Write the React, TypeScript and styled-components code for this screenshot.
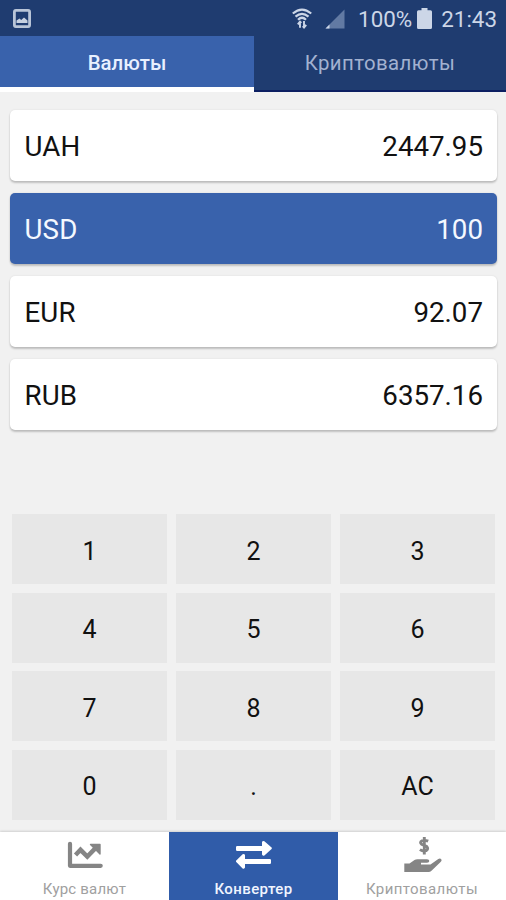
import React from 'react';
import styled, { createGlobalStyle } from 'styled-components';

const GlobalStyle = createGlobalStyle`
  * { box-sizing: border-box; }
  body { margin: 0; background: #f1f1f1; font-family: Roboto, sans-serif; }
  button { font: inherit; border: 0; padding: 0; margin: 0; }
`;

const Screen = styled.div`
  width: 506px;
  height: 900px;
  display: flex;
  flex-direction: column;
  background: #f1f1f1;
  overflow: hidden;
`;

const StatusBar = styled.header`
  height: 36px;
  flex: none;
  display: flex;
  align-items: center;
  background: #1f3c70;
  color: #ccd6e7;
  padding: 1px 9px 0 13px;
`;

const Spacer = styled.div`
  flex: 1;
`;

const StatusText = styled.span<{ $gap: number }>`
  font-size: 22.4px;
  line-height: 30px;
  margin-left: ${(p) => p.$gap}px;
  padding-top: 1px;
`;

const StatusIcon = styled.svg<{ $gap?: number }>`
  flex: none;
  margin-left: ${(p) => p.$gap ?? 0}px;
`;

const Tabs = styled.div`
  display: flex;
  height: 56px;
  flex: none;
`;

const Tab = styled.button<{ $active?: boolean }>`
  width: ${(p) => (p.$active ? 254 : 252)}px;
  height: 56px;
  background: ${(p) => (p.$active ? '#3962ac' : '#1f3c70')};
  color: ${(p) => (p.$active ? '#e8f0ff' : '#a3b2d0')};
  border-bottom: ${(p) => (p.$active ? '5px solid #ffffff' : '2px solid #0c1f62')};
  padding-top: ${(p) => (p.$active ? 3 : 0)}px;
  font-size: 20.4px;
  font-weight: ${(p) => (p.$active ? 500 : 400)};
  letter-spacing: ${(p) => (p.$active ? 0 : 0.4)}px;
`;

const CurrencyList = styled.main`
  display: flex;
  flex-direction: column;
  gap: 12px;
  padding: 18px 9px 0 10px;
  height: 422px;
  flex: none;
`;

const CurrencyRow = styled.div<{ $active?: boolean }>`
  height: 71px;
  flex: none;
  display: flex;
  justify-content: space-between;
  align-items: center;
  padding: 1px 14px 0 14.4px;
  border-radius: 5px;
  background: ${(p) => (p.$active ? '#3962ac' : '#ffffff')};
  color: ${(p) => (p.$active ? '#f4f8ff' : '#111111')};
  box-shadow: 0 2px 2px rgba(0, 0, 0, 0.2), 0 0 2px rgba(0, 0, 0, 0.1);
  font-size: 27.7px;
`;

const CurrencyCode = styled.span`
  letter-spacing: 0.2px;
`;

const Keypad = styled.section`
  display: grid;
  grid-template-columns: repeat(3, 155px);
  grid-template-rows: repeat(4, 70px);
  column-gap: 9px;
  row-gap: 8.67px;
  padding-left: 12px;
  height: 318px;
  flex: none;
`;

const Key = styled.button`
  background: #e7e7e7;
  color: #111111;
  font-size: 25px;
  padding: 4px 0 0;
`;

const BottomNav = styled.nav`
  display: grid;
  grid-template-columns: 169px 169px 168px;
  flex: 1;
  background: #ffffff;
  box-shadow: 0 -1px 2px rgba(0, 0, 0, 0.14);
`;

const NavItem = styled.button<{ $active?: boolean }>`
  display: flex;
  flex-direction: column;
  align-items: center;
  background: ${(p) => (p.$active ? '#305ca9' : '#ffffff')};
  color: ${(p) => (p.$active ? '#ffffff' : '#858585')};
`;

const NavIcon = styled.svg`
  flex: none;
  display: block;
`;

const NavLabel = styled.span<{ $tracking: number; $active?: boolean }>`
  font-size: 15px;
  line-height: 20px;
  margin-top: 3px;
  font-weight: ${(p) => (p.$active ? 500 : 400)};
  color: ${(p) => (p.$active ? '#f0f5ff' : '#a0a0a0')};
  letter-spacing: ${(p) => p.$tracking}px;
`;

const currencies = [
  { code: 'UAH', value: '2447.95' },
  { code: 'USD', value: '100', active: true },
  { code: 'EUR', value: '92.07' },
  { code: 'RUB', value: '6357.16' },
];

const keys = ['1', '2', '3', '4', '5', '6', '7', '8', '9', '0', '.', 'AC'];

const PictureIcon = () => (
  <StatusIcon width="18" height="19" viewBox="0 0 18 19">
    <rect x="1.4" y="1.4" width="15.2" height="16.2" rx="1.5" fill="#1f3c70" stroke="#b9c5d8" strokeWidth="2.8" />
    <path d="M3.5 14V11.5L6.5 9.5 8.2 11 11 8.5 14.5 11.5V14Z" fill="#c6d0e0" />
  </StatusIcon>
);

const WifiIcon = () => (
  <StatusIcon width="20" height="21" viewBox="0 0 20 21" fill="none" stroke="#ccd6e7" strokeWidth="2.2">
    <path d="M.8 5.5Q10-2.4 19.2 5.5M3.5 8.7Q10 3 16.5 8.7M6 11.7Q10 7.8 14 11.7" />
    <path d="M8 19.8V13.7M5.8 16.4 8 13.7 9.3 15M12 13V19.2M14.2 16.8 12 19.5 10.7 18.2" strokeWidth="1.9" />
  </StatusIcon>
);

const SignalIcon = () => (
  <StatusIcon $gap={13} width="20" height="20" viewBox="0 0 20 20">
    <path d="M19.5.5V19.5H.5Z" fill="#627aa3" />
    <path d="M4.5 15.5V19.5H.5Z" fill="#ccd6e7" />
  </StatusIcon>
);

const BatteryIcon = () => (
  <StatusIcon $gap={5} width="15" height="21" viewBox="0 0 15 21">
    <path d="M4.5 0H10.5V2.2H13.5Q15 2.2 15 3.7V19.5Q15 21 13.5 21H1.5Q0 21 0 19.5V3.7Q0 2.2 1.5 2.2H4.5Z" fill="#ccd6e7" />
  </StatusIcon>
);

const ChartIcon = () => (
  <NavIcon width="170" height="44" viewBox="0 0 170 44" fill="none" stroke="currentColor">
    <path d="M70 11.8V33.8H100.7" strokeWidth="4.2" strokeLinecap="round" strokeLinejoin="round" />
    <path d="M75.5 23 80.5 17.8 87.3 24.5 96 15.7" strokeWidth="4.5" />
    <path d="M90.5 12.5H100V22Z" fill="currentColor" strokeWidth="1.4" strokeLinejoin="round" />
  </NavIcon>
);

const ExchangeIcon = () => (
  <NavIcon width="170" height="44" viewBox="1 0 170 44" fill="currentColor">
    <path d="M69.2 14H94V10.2Q94.4 8.3 96.4 9.2L103 15.1Q104.7 16.3 103 17.6L96.4 23.5Q94.4 24.2 94 22.6V19H69.2Q68 19 68 17.8V15.2Q68 14 69.2 14Z" />
    <path d="M101.8 27H77V23.2Q76.6 21.3 74.6 22.2L68.8 28.1Q67.1 29.3 68.8 30.6L74.6 36.5Q76.6 37.2 77 35.6V32H101.8Q103 32 103 30.8V28.2Q103 27 101.8 27Z" />
  </NavIcon>
);

const HandIcon = () => (
  <NavIcon width="170" height="44" viewBox="0 0 170 44">
    <path d="M67.3 31.5H72.5L77.5 28Q78.6 27.3 80.5 27.3H90Q92.3 27.3 92.3 29.1Q92.3 30.8 90 30.8H84V32.4H93.5L101.3 27Q103.2 26 104.4 27.4Q105.1 28.6 103.6 29.9L94.5 38.7Q93.2 39.9 91.5 39.9H67.3Z" fill="currentColor" />
    <path d="M91.2 9.2Q87.7 7.7 85 8.8Q82.3 10.2 84.6 12.3L89.7 14.5Q91.9 17 89.1 18.7Q86 19.6 82.9 17.6M87.3 5V22.4" fill="none" stroke="currentColor" strokeWidth="2.9" />
  </NavIcon>
);

export default function App() {
  return (
    <>
      <GlobalStyle />
      <Screen>
        <StatusBar>
          <PictureIcon />
          <Spacer />
          <WifiIcon />
          <SignalIcon />
          <StatusText $gap={13}>100%</StatusText>
          <BatteryIcon />
          <StatusText $gap={9}>21:43</StatusText>
        </StatusBar>
        <Tabs>
          <Tab $active>Валюты</Tab>
          <Tab>Криптовалюты</Tab>
        </Tabs>
        <CurrencyList>
          {currencies.map((c) => (
            <CurrencyRow key={c.code} $active={c.active}>
              <CurrencyCode>{c.code}</CurrencyCode>
              <span>{c.value}</span>
            </CurrencyRow>
          ))}
        </CurrencyList>
        <Keypad>
          {keys.map((k) => (
            <Key key={k}>{k}</Key>
          ))}
        </Keypad>
        <BottomNav>
          <NavItem>
            <ChartIcon />
            <NavLabel $tracking={0.2}>Курс валют</NavLabel>
          </NavItem>
          <NavItem $active>
            <ExchangeIcon />
            <NavLabel $active $tracking={0.4}>Конвертер</NavLabel>
          </NavItem>
          <NavItem>
            <HandIcon />
            <NavLabel $tracking={0.4}>Криптовалюты</NavLabel>
          </NavItem>
        </BottomNav>
      </Screen>
    </>
  );
}
